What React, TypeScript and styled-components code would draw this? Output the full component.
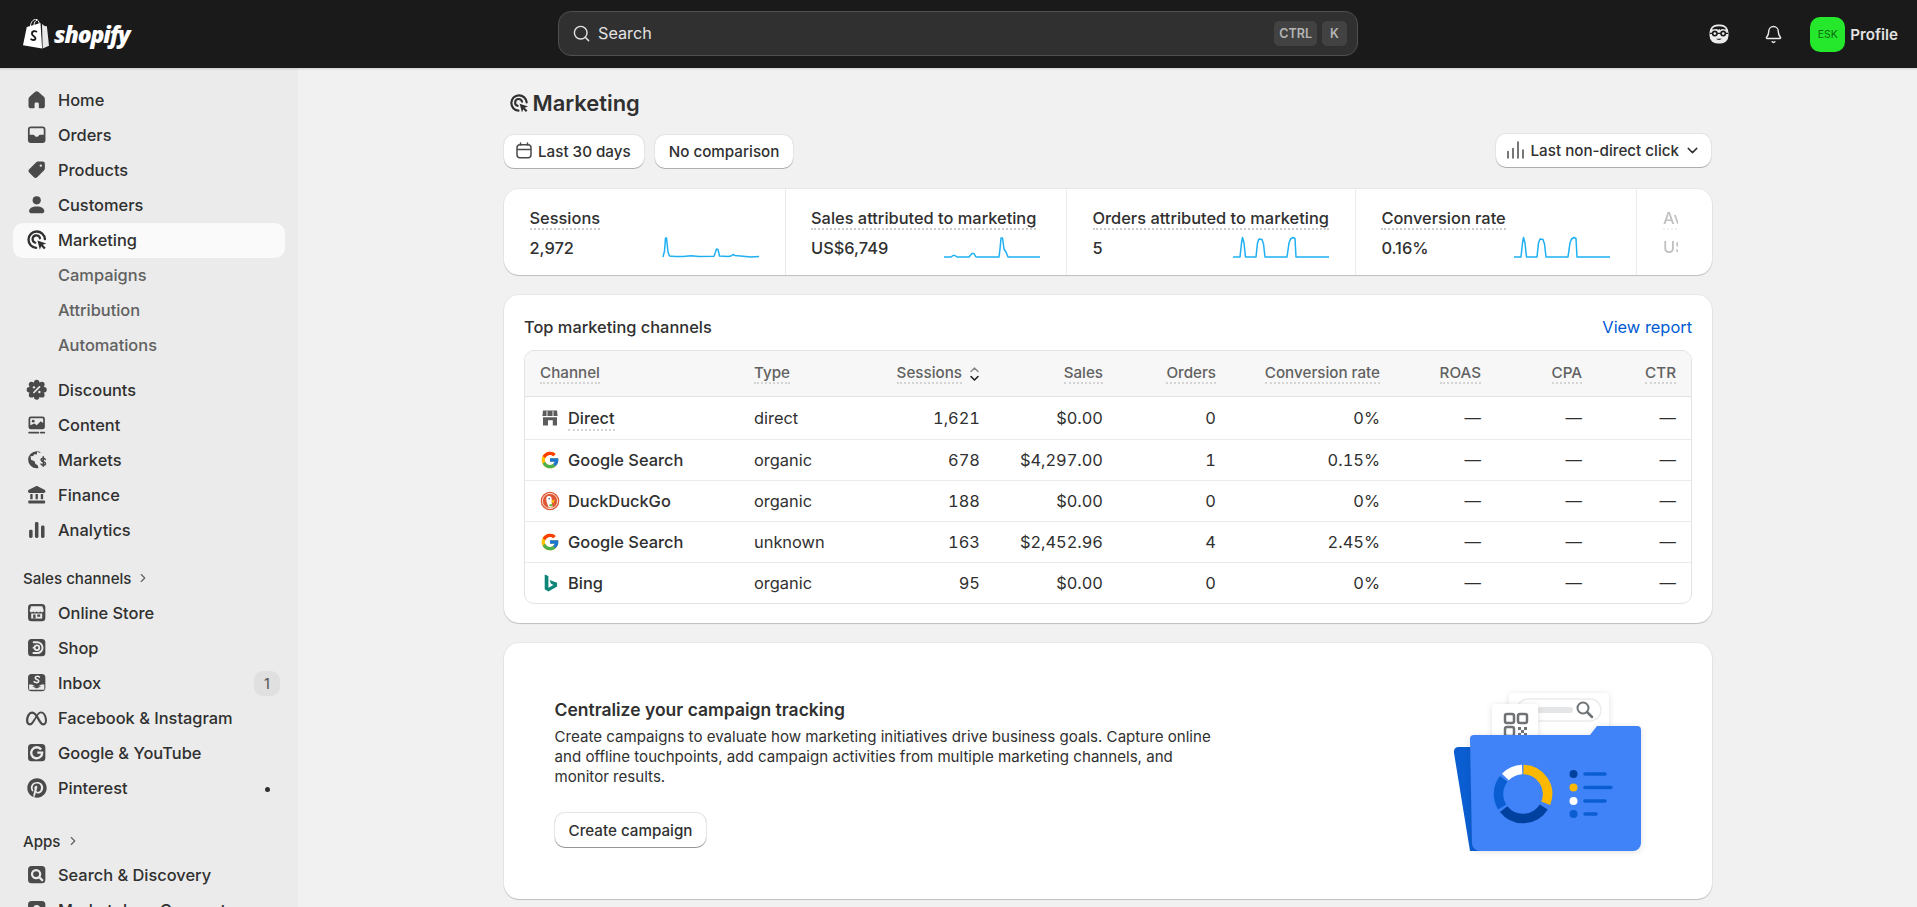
import { ReactNode } from 'react';
import styled, { createGlobalStyle } from 'styled-components';
import { Bell, ChevronDown, ChevronRight, Search } from 'lucide-react';
import { FaMeta, FaPinterest } from 'react-icons/fa6';
import { FcGoogle } from 'react-icons/fc';

const GlobalStyle = createGlobalStyle`
  html, body {
    margin: 0;
    height: 100%;
    overflow: hidden;
    background: #f1f1f1;
    font-family: Inter, "Noto Sans", sans-serif;
    font-size: 16.4px;
    color: #303030;
  }
  * { box-sizing: border-box; }
`;

/* ---------- icons (20 unit polaris style grid) ---------- */

const Ico = ({ children }: { children: ReactNode }) => (
  <svg width="23.4" height="23.4" viewBox="0 0 20 20" fill="#4a4a4a" fillRule="evenodd">
    {children}
  </svg>
);

const HomeIcon = () => (
  <Ico>
    <path d="M10 2.8c-.5 0-.9.2-1.3.5L4.1 7.2C3.4 7.8 3 8.6 3 9.5v5.8c0 1.1.9 2 2 2h2.3c.5 0 .9-.4.9-.9v-2.9c0-.6.5-1.1 1.1-1.1h1.4c.6 0 1.1.5 1.1 1.1v2.9c0 .5.4.9.9.9H15c1.1 0 2-.9 2-2V9.5c0-.9-.4-1.7-1.1-2.3l-4.6-3.9c-.4-.3-.8-.5-1.3-.5z" />
  </Ico>
);
const OrdersIcon = () => (
  <Ico>
    <path d="M5 3h10a2.5 2.5 0 0 1 2.5 2.5v9A2.5 2.5 0 0 1 15 17H5a2.5 2.5 0 0 1-2.5-2.5v-9A2.5 2.5 0 0 1 5 3zM4 5.5c0-.6.4-1 1-1h10c.6 0 1 .4 1 1V10h-3.2c-.3 0-.6.2-.8.4l-.6.9c-.2.3-.5.4-.8.4H9.4c-.3 0-.6-.1-.8-.4l-.6-.9c-.2-.2-.5-.4-.8-.4H4z" />
  </Ico>
);
const TagIcon = () => (
  <Ico>
    <path d="M11 3h4a2 2 0 0 1 2 2v4c0 .5-.2 1-.6 1.4l-6 6c-.8.8-2 .8-2.8 0l-4-4c-.8-.8-.8-2 0-2.8l6-6C9.9 3.2 10.5 3 11 3zm2.5 2.5a1 1 0 1 0 0 2 1 1 0 0 0 0-2z" />
  </Ico>
);
const PersonIcon = () => (
  <Ico>
    <circle cx="10" cy="6.3" r="3.5" />
    <path d="M3.5 15.5c0-2.5 2.5-4 6.5-4s6.5 1.5 6.5 4v.2c0 .9-.7 1.6-1.5 1.6H5c-.8 0-1.5-.7-1.5-1.6z" />
  </Ico>
);
const TargetShape = () => (
  <>
    <path d="M9.5 17A7 7 0 1 1 17 9.5" fill="none" stroke="currentColor" strokeWidth="2" strokeLinecap="round" />
    <path d="M8.8 12.6A3.2 3.2 0 1 1 12.8 8.8" fill="none" stroke="currentColor" strokeWidth="1.9" strokeLinecap="round" />
    <path d="M10.6 10.6l7.6 2.6-3 1.1 2.5 2.5-1.4 1.4-2.5-2.500-1.100 3z" fill="currentColor" />
  </>
);
const TargetIcon = () => (
  <svg width="23.4" height="23.4" viewBox="0 0 20 20" color="#303030">
    <TargetShape />
  </svg>
);
const DiscountIcon = () => (
  <Ico>
    {[0, 45, 90, 135, 180, 225, 270, 315].map((a) => (
      <circle
        key={a}
        r="2.3"
        cx={10 + 6.3 * Math.cos((a * Math.PI) / 180)}
        cy={10 + 6.3 * Math.sin((a * Math.PI) / 180)}
      />
    ))}
    <circle cx="10" cy="10" r="6.6" />
    <path d="M7.6 12.4l4.8-4.8" stroke="#ebebeb" strokeWidth="1.5" strokeLinecap="round" />
    <circle cx="7.7" cy="8" r="1" fill="#ebebeb" />
    <circle cx="12.3" cy="12" r="1" fill="#ebebeb" />
  </Ico>
);
const ContentIcon = () => (
  <Ico>
    <path d="M5 3h10a2 2 0 0 1 2 2v7a2 2 0 0 1-2 2H5a2 2 0 0 1-2-2V5a2 2 0 0 1 2-2zm-.5 7.5V5.200c0-.4.3-.7.7-.7h9.600c.4 0 .7.3.7.7v3.300l-2-1.500-3.500 3.500-2-1.500z" />
    <circle cx="7" cy="7" r="1.200" />
    <path d="M3.500 16.700h8M13.500 16.700h3" stroke="#4a4a4a" strokeWidth="1.500" strokeLinecap="round" />
  </Ico>
);
const MarketsIcon = () => (
  <Ico>
    <path d="M10 2.700a7.300 7.300 0 0 0 0 14.600c.6 0 1.100-.1 1.600-.2-.5-.8-.6-1.500-.6-2.100l-2.200-1.500-.6-2.200-3-1.300-.5-3 2.300-.2.800-1.500 2.300.3.300-2.300 1.900.8 1.300-.5A7.300 7.300 0 0 0 10 2.700z" />
    <path d="M17.400 9.800c-.3-.7-1-1.100-1.800-1.100-1 0-1.800.6-1.800 1.500 0 2 3.700 1.100 3.700 3.100 0 .9-.9 1.500-1.900 1.500-.8 0-1.600-.4-1.900-1.100M15.600 7.500v8.200" fill="none" stroke="#4a4a4a" strokeWidth="1.300" strokeLinecap="round" />
  </Ico>
);
const FinanceIcon = () => (
  <Ico>
    <path d="M9.300 2.700c.4-.2 1-.2 1.400 0l6 3c.5.3.8.7.8 1.300 0 .8-.7 1.500-1.500 1.500H4c-.8 0-1.500-.7-1.500-1.500 0-.6.3-1 .8-1.300z" />
    <path d="M4.500 9.500h2v4.500h-2zM9 9.500h2v4.500H9zM13.500 9.500h2v4.500h-2z" />
    <rect x="2.800" y="15" width="14.400" height="2.500" rx=".8" />
  </Ico>
);
const AnalyticsIcon = () => (
  <Ico>
    <rect x="3.500" y="10" width="3" height="7" rx="1.200" />
    <rect x="8.500" y="3.500" width="3" height="13.500" rx="1.200" />
    <rect x="13.700" y="6.500" width="3" height="10.500" rx="1.200" />
  </Ico>
);

const AppTile = ({ children }: { children: ReactNode }) => (
  <Ico>
    <rect x="2.600" y="2.600" width="14.800" height="14.800" rx="3" />
    {children}
  </Ico>
);
const StoreTile = () => (
  <AppTile>
    <path d="M5.200 4.500h9.600l1.200 3.600c0 1-.8 1.600-1.500 1.600s-1.300-.4-1.500-1c-.2.600-.9 1-1.500 1-.7 0-1.300-.4-1.500-1-.2.600-.8 1-1.500 1-.6 0-1.300-.4-1.500-1-.2.600-.8 1-1.500 1S4 9.100 4 8.100z" fill="#ebebeb" />
    <path d="M5.300 10.700h9.400v4.300H5.300z" fill="#ebebeb" />
    <path d="M7 11.500h2v3.500H7zM10.500 11.500h2.500v2h-2.500z" />
  </AppTile>
);
const ShopTile = () => (
  <AppTile>
    <path d="M7.400 5.400h3a4.600 4.600 0 0 1 0 9.200H7.200" fill="none" stroke="#ebebeb" strokeWidth="1.700" strokeLinecap="round" />
    <circle cx="10.200" cy="10" r="2" fill="none" stroke="#ebebeb" strokeWidth="1.500" />
    <path d="M6.600 10h2" stroke="#ebebeb" strokeWidth="1.500" />
  </AppTile>
);
const InboxTile = () => (
  <AppTile>
    <path d="M3.500 11.500v4.500h13v-4.500h-2.500l-4 2.500-4-2.500z" fill="#ebebeb" />
    <path d="M6 13l4 2 4-2" fill="#4a4a4a" />
    <path d="M12.300 5.200c-.4-.5-1.200-.8-2-.7-1 .1-1.800.8-1.500 1.700.4 1.200 3 1 3 2.400 0 1-1.200 1.500-2.300 1.300-.7-.1-1.300-.4-1.700-.8" fill="none" stroke="#ebebeb" strokeWidth="1.300" strokeLinecap="round" />
  </AppTile>
);
const GoogleTile = () => (
  <AppTile>
    <path d="M13.800 7.300A4.700 4.700 0 1 0 14.700 10H10.500" fill="none" stroke="#ebebeb" strokeWidth="2" />
  </AppTile>
);
const SearchTile = () => (
  <AppTile>
    <circle cx="9.500" cy="9.500" r="3.500" fill="none" stroke="#ebebeb" strokeWidth="1.900" />
    <path d="M12.200 12.200l2.500 2.500" stroke="#ebebeb" strokeWidth="2" strokeLinecap="round" />
  </AppTile>
);
const ConnectTile = () => (
  <AppTile>
    <circle cx="10" cy="9" r="3" fill="#ebebeb" />
  </AppTile>
);
const MetaGlyph = () => <FaMeta size={21} color="#4a4a4a" />;
const PinGlyph = () => <FaPinterest size={20} color="#4a4a4a" />;

const DirectIcon = () => (
  <svg width="20" height="20" viewBox="0 0 20 20" fill="#5c5c5c">
    <path d="M3 2.500h14l.6 5.500H2.400z" />
    <path d="M7 3v5M13 3v5" stroke="#fff" strokeWidth=".9" />
    <path d="M3 9.300h14v8.200h-4.200v-5.300H8v5.300H3z" />
  </svg>
);
const BingIcon = () => (
  <svg width="20" height="20" viewBox="0 0 20 20" fill="#0f8577">
    <path d="M4.700 1.600l3.700 1.300v11.900l5-2.900-2.400-1.100-1.500-3.800 7.600 2.700v3.800L8.400 18.400l-3.700-2.100z" />
  </svg>
);
const DuckIcon = () => (
  <svg width="20" height="20" viewBox="0 0 20 20">
    <circle cx="10" cy="10" r="9.300" fill="#de5833" />
    <circle cx="10" cy="10" r="7.600" fill="none" stroke="#fff" strokeWidth=".8" />
    <path d="M6.700 5.800c1.700-1.400 4-1 4.700.6.800 2 .2 4.200.5 6.600.1 1.200.4 2.400.9 3.400H8.700C7.700 13.500 5.200 9 6.700 5.800z" fill="#fff" />
    <circle cx="9.200" cy="7.700" r=".8" fill="#2d4f8e" />
    <path d="M11.300 9.700l3.300-1-.3 1.300-1.600.5 1.500.3-.1 1.200-2.700-.8z" fill="#fdd20a" />
    <path d="M9.200 13.600l3-.6.100 2.500-3-.3z" fill="#65bc46" />
  </svg>
);
const CalendarIcon = () => (
  <svg width="18" height="18" viewBox="0 0 18 18" fill="none" stroke="#4a4a4a" strokeWidth="1.500">
    <rect x="2" y="2.800" width="14" height="13" rx="3" />
    <path d="M2 7.500h14" />
    <path d="M5.500 1v2M12.500 1v2" strokeLinecap="round" />
  </svg>
);
const BarsIcon = () => (
  <svg width="20" height="20" viewBox="0 0 20 20" fill="none" stroke="#4a4a4a" strokeWidth="1.500" strokeLinecap="round">
    <path d="M2 11.500V18M7 8.500V18M12 2v16M17 10v8" />
  </svg>
);
const SortIcon = () => (
  <svg width="11" height="16" viewBox="0 0 11 16" fill="none" strokeWidth="1.500" strokeLinecap="round" strokeLinejoin="round">
    <path d="M2 5.500L5.500 2 9 5.500" stroke="#8a8a8a" />
    <path d="M2 10.500L5.500 14 9 10.500" stroke="#1a1a1a" />
  </svg>
);
const FaceIcon = () => (
  <svg width="20" height="20" viewBox="0 0 20 20">
    <rect x=".5" y=".5" width="19" height="19" rx="8" fill="#ececec" />
    <path d="M3 5.500c1-2 3-3.200 7-3.200s6 1.200 7 3.200l-4.500-.6-1 1.300-1.200-1.300-1.300 1.200-1-1.200z" fill="#1a1a1a" />
    <circle cx="5.800" cy="9.600" r="3" fill="#1a1a1a" />
    <circle cx="14.200" cy="9.600" r="3" fill="#1a1a1a" />
    <circle cx="5.800" cy="9.600" r="1.300" fill="#ececec" />
    <circle cx="14.200" cy="9.600" r="1.300" fill="#ececec" />
    <path d="M8 9.300h4M.8 9.300h2.500M16.800 9.300h2.400" stroke="#1a1a1a" strokeWidth="1.300" />
    <path d="M7 14.800c1.500 1.500 4.500 1.500 6 0z" fill="#1a1a1a" />
  </svg>
);
const ShopifyBag = () => (
  <svg width="26" height="30" viewBox="0 0 26 30">
    <path d="M3.800 8L17.500 4l1.600 25.500L0 26.300z" fill="#fff" />
    <path d="M19 5l2.500 2 2.400.3L26 26.800 19.700 29.500z" fill="#e8e8e8" />
    <path d="M7.500 7c0-3.500 3-6.800 5-6.800 2.500 0 3.500 2.500 3.800 4.800M11 6c.2-2.300 1.400-4.700 3-4.800" fill="none" stroke="#fff" strokeWidth="1" />
    <path d="M13.300 12.500c-1.200-.6-4.300-.7-4.400 2-.1 2.700 3.700 2.700 3.600 5-.1 1.900-2.800 1.700-4.300.7" fill="none" stroke="#1a1a1a" strokeWidth="1.900" strokeLinecap="round" />
  </svg>
);

/* ---------- sparklines ---------- */

const Spark = ({ points }: { points: number[][] }) => (
  <SparkSvg viewBox="0 0 96 22">
    <polyline points={points.map((p) => p.join(',')).join(' ')} />
  </SparkSvg>
);

const sparkSessions = [[0, 20], [1.500, 14], [2.500, 1], [3.500, 1], [5, 15], [6.500, 19], [12, 19.500], [20, 19.500], [28, 18.700], [36, 19.600], [51, 19.300], [52.500, 15], [53.500, 12], [55, 12.500], [56.500, 19], [65, 19.600], [68, 19], [70, 17.500], [72, 18.500], [80, 19.200], [88, 20], [96, 19.600]];
const sparkSales = [[0, 20], [7, 20], [9, 18.500], [11, 18.500], [13, 20], [25, 20], [28, 16.500], [30, 16.500], [32, 20], [55, 20], [56, 12], [57, 1], [58.500, 1], [60, 12], [62, 15], [64, 20], [96, 20]];
const sparkPulse = [[0, 20], [7, 20], [8.500, 6], [9.500, 0.500], [11, 6], [12.500, 20], [23, 20], [24.500, 6], [26, 2], [29, 2.500], [30.500, 7], [32, 20], [54, 20], [56, 6], [57.500, 2], [60, 0.500], [62, 1.500], [63, 20], [96, 20]];

/* ---------- illustration ---------- */

const arcPath = (start: number, end: number) => {
  const r = 24.5;
  const at = (deg: number) => {
    const a = ((deg - 90) * Math.PI) / 180;
    return `${103 + r * Math.cos(a)} ${123 + r * Math.sin(a)}`;
  };
  return `M${at(start)} A${r} ${r} 0 ${end - start > 180 ? 1 : 0} 1 ${at(end)}`;
};

const FolderArt = () => (
  <svg width="260" height="200" viewBox="0 0 260 200">
    <defs>
      <filter id="soft" x="-30%" y="-30%" width="160%" height="160%">
        <feDropShadow dx="0" dy="1" stdDeviation="3" floodColor="#000" floodOpacity=".12" />
      </filter>
    </defs>
    <path d="M38 76h26v104H50L34 82c-.5-3 1-6 4-6z" fill="#0a5ed2" />
    <rect x="89" y="22" width="100" height="60" rx="4" fill="#fff" filter="url(#soft)" />
    <rect x="97" y="28" width="84" height="22" rx="11" fill="#fff" stroke="#ececec" strokeWidth="1.500" />
    <rect x="117" y="36" width="36" height="6" rx="3" fill="#e4e5e7" />
    <circle cx="163" cy="37" r="5.500" fill="none" stroke="#6f7376" strokeWidth="2" />
    <path d="M167 41l5 5" stroke="#6f7376" strokeWidth="2.500" strokeLinecap="round" />
    <rect x="72" y="33" width="46" height="50" rx="4" fill="#fff" filter="url(#soft)" />
    <g fill="none" stroke="#6f7376" strokeWidth="2.500">
      <rect x="85" y="43" width="9" height="9" rx="2" />
      <rect x="98" y="43" width="9" height="9" rx="2" />
      <rect x="85" y="56" width="9" height="9" rx="2" />
    </g>
    <path d="M98 56h3v3h-3zM104 56h3v3h-3zM101 59h3v3h-3zM98 62h3v3h-3zM104 62h3v3h-3z" fill="#6f7376" />
    <path
      d="M54 64h116l7-9h40a4 4 0 0 1 4 4v113a8 8 0 0 1-8 8H60a8 8 0 0 1-8-8L50 68a4 4 0 0 1 4-4z"
      fill="#3f83f8"
      filter="url(#soft)"
    />
    <g fill="none" strokeWidth="9.500">
      <path d={arcPath(1, 112)} stroke="#ffb800" />
      <path d={arcPath(122, 232)} stroke="#00409e" />
      <path d={arcPath(238, 308)} stroke="#0a5ed2" />
      <path d={arcPath(314, 358)} stroke="#fff" />
    </g>
    <circle cx="153.500" cy="103" r="4" fill="#00409e" />
    <circle cx="153.500" cy="116.500" r="4" fill="#ffb800" />
    <circle cx="153.500" cy="130" r="4" fill="#fff" />
    <circle cx="153.500" cy="143" r="4" fill="#0a5ed2" />
    <path d="M165 103h20M165 116.500h26M165 130h20M165 143h11" stroke="#0a5ed2" strokeWidth="3.500" strokeLinecap="round" />
  </svg>
);

/* ---------- data ---------- */

const mainNav = [
  { label: 'Home', icon: <HomeIcon /> },
  { label: 'Orders', icon: <OrdersIcon /> },
  { label: 'Products', icon: <TagIcon /> },
  { label: 'Customers', icon: <PersonIcon /> },
];
const subNav = ['Campaigns', 'Attribution', 'Automations'];
const lowerNav = [
  { label: 'Discounts', icon: <DiscountIcon /> },
  { label: 'Content', icon: <ContentIcon /> },
  { label: 'Markets', icon: <MarketsIcon /> },
  { label: 'Finance', icon: <FinanceIcon /> },
  { label: 'Analytics', icon: <AnalyticsIcon /> },
];

const metrics = [
  { title: 'Sessions', value: '2,972', points: sparkSessions },
  { title: 'Sales attributed to marketing', value: 'US$6,749', points: sparkSales },
  { title: 'Orders attributed to marketing', value: '5', points: sparkPulse },
  { title: 'Conversion rate', value: '0.16%', points: sparkPulse },
];

const columns = [
  { label: 'Channel', width: 214 },
  { label: 'Type', width: 141 },
  { label: 'Sessions', width: 115, right: true, sort: true },
  { label: 'Sales', width: 123, right: true },
  { label: 'Orders', width: 113, right: true },
  { label: 'Conversion rate', width: 164, right: true },
  { label: 'ROAS', width: 101, right: true },
  { label: 'CPA', width: 101, right: true },
  { label: 'CTR', width: 94, right: true },
];

const rows = [
  { icon: <DirectIcon />, name: 'Direct', dotted: true, type: 'direct', sessions: '1,621', sales: '$0.00', orders: '0', rate: '0%' },
  { icon: <FcGoogle size={20} />, name: 'Google Search', type: 'organic', sessions: '678', sales: '$4,297.00', orders: '1', rate: '0.15%' },
  { icon: <DuckIcon />, name: 'DuckDuckGo', type: 'organic', sessions: '188', sales: '$0.00', orders: '0', rate: '0%' },
  { icon: <FcGoogle size={20} />, name: 'Google Search', type: 'unknown', sessions: '163', sales: '$2,452.96', orders: '4', rate: '2.45%' },
  { icon: <BingIcon />, name: 'Bing', type: 'organic', sessions: '95', sales: '$0.00', orders: '0', rate: '0%' },
];

/* ---------- page ---------- */

const App = () => {
  return (
    <Page>
      <GlobalStyle />
      <TopBar>
        <LogoLink>
          <ShopifyBag />
          <LogoWord>shopify</LogoWord>
        </LogoLink>
        <SearchBox>
          <Search size={19} strokeWidth={1.8} color="#e3e3e3" />
          <SearchText>Search</SearchText>
          <Kbd>CTRL</Kbd>
          <Kbd>K</Kbd>
        </SearchBox>
        <TopActions>
          <TopIconSlot>
            <FaceIcon />
          </TopIconSlot>
          <TopIconSlot>
            <Bell size={19} strokeWidth={1.8} color="#e9e9e9" />
          </TopIconSlot>
          <ProfileWrap>
            <Avatar>ESK</Avatar>
            <ProfileName>Profile</ProfileName>
          </ProfileWrap>
        </TopActions>
      </TopBar>

      <Body>
        <Sidebar>
          {mainNav.map((item) => (
            <NavRow key={item.label}>
              {item.icon}
              <NavLabel>{item.label}</NavLabel>
            </NavRow>
          ))}
          <NavRow $active>
            <TargetIcon />
            <NavLabel>Marketing</NavLabel>
          </NavRow>
          {subNav.map((label) => (
            <SubRow key={label}>{label}</SubRow>
          ))}
          <NavGroup>
            {lowerNav.map((item) => (
              <NavRow key={item.label}>
                {item.icon}
                <NavLabel>{item.label}</NavLabel>
              </NavRow>
            ))}
          </NavGroup>

          <SectionHead>
            Sales channels <ChevronRight size={14} color="#616161" />
          </SectionHead>
          <NavRow>
            <StoreTile />
            <NavLabel>Online Store</NavLabel>
          </NavRow>
          <NavRow>
            <ShopTile />
            <NavLabel>Shop</NavLabel>
          </NavRow>
          <NavRow>
            <InboxTile />
            <NavLabel>Inbox</NavLabel>
            <CountBadge>1</CountBadge>
          </NavRow>
          <NavRow>
            <IconSlot>
              <MetaGlyph />
            </IconSlot>
            <NavLabel>Facebook &amp; Instagram</NavLabel>
          </NavRow>
          <NavRow>
            <GoogleTile />
            <NavLabel>Google &amp; YouTube</NavLabel>
          </NavRow>
          <NavRow>
            <IconSlot>
              <PinGlyph />
            </IconSlot>
            <NavLabel>Pinterest</NavLabel>
            <StatusDot />
          </NavRow>

          <SectionHead $wide>
            Apps <ChevronRight size={14} color="#616161" />
          </SectionHead>
          <NavRow>
            <SearchTile />
            <NavLabel>Search &amp; Discovery</NavLabel>
          </NavRow>
          <NavRow>
            <ConnectTile />
            <NavLabel>Marketplace Connect</NavLabel>
          </NavRow>
        </Sidebar>

        <Main>
          <Column>
            <TitleRow>
              <TitleIcon viewBox="0 0 20 20">
                <TargetShape />
              </TitleIcon>
              <Title>Marketing</Title>
            </TitleRow>

            <Toolbar>
              <ToolGroup>
                <IconToolButton>
                  <CalendarIcon />
                  Last 30 days
                </IconToolButton>
                <ToolButton>No comparison</ToolButton>
              </ToolGroup>
              <ModelButton>
                <BarsIcon />
                Last non-direct click
                <ChevronDown size={17} color="#303030" />
              </ModelButton>
            </Toolbar>

            <MetricCard>
              {metrics.map((m) => (
                <MetricCell key={m.title}>
                  <MetricInner>
                    <MetricTitle>{m.title}</MetricTitle>
                    <MetricRow>
                      <MetricValue>{m.value}</MetricValue>
                      <Spark points={m.points} />
                    </MetricRow>
                  </MetricInner>
                </MetricCell>
              ))}
              <FadedCell>
                <FadedClip>
                  <MetricTitle>Average order value</MetricTitle>
                  <MetricValue>US$1,350</MetricValue>
                </FadedClip>
              </FadedCell>
            </MetricCard>

            <ChannelCard>
              <CardHead>
                <CardTitle>Top marketing channels</CardTitle>
                <ReportLink>View report</ReportLink>
              </CardHead>
              <TableWrap>
                <Table>
                  <colgroup>
                    {columns.map((c) => (
                      <Col key={c.label} $w={c.width} />
                    ))}
                  </colgroup>
                  <thead>
                    <tr>
                      {columns.map((c) => (
                        <Th key={c.label} $right={c.right}>
                          <HeadInner $right={c.right}>
                            <HeadText>{c.label}</HeadText>
                            {c.sort && <SortIcon />}
                          </HeadInner>
                        </Th>
                      ))}
                    </tr>
                  </thead>
                  <tbody>
                    {rows.map((r, i) => (
                      <tr key={i}>
                        <Td>
                          <ChannelCell>
                            <ChannelIcon>{r.icon}</ChannelIcon>
                            <ChannelName $dotted={r.dotted}>{r.name}</ChannelName>
                          </ChannelCell>
                        </Td>
                        <Td>{r.type}</Td>
                        <Td $right>{r.sessions}</Td>
                        <Td $right>{r.sales}</Td>
                        <Td $right>{r.orders}</Td>
                        <Td $right>{r.rate}</Td>
                        <Td $right>—</Td>
                        <Td $right>—</Td>
                        <Td $right>—</Td>
                      </tr>
                    ))}
                  </tbody>
                </Table>
              </TableWrap>
            </ChannelCard>

            <PromoCard>
              <PromoText>
                <PromoTitle>Centralize your campaign tracking</PromoTitle>
                <PromoDesc>
                  Create campaigns to evaluate how marketing initiatives drive business goals. Capture online and
                  offline touchpoints, add campaign activities from multiple marketing channels, and monitor results.
                </PromoDesc>
                <CreateButton>Create campaign</CreateButton>
              </PromoText>
              <FolderArt />
            </PromoCard>
          </Column>
        </Main>
      </Body>
    </Page>
  );
};

export default App;

const Page = styled.div`
  height: 907px;
  display: flex;
  flex-direction: column;
  overflow: hidden;
`;

const TopBar = styled.header`
  height: 68px;
  flex: none;
  background: #1a1a1a;
  display: grid;
  grid-template-columns: 558px 800px 1fr;
  align-items: center;
  box-shadow: 0 1px 2px rgba(0, 0, 0, 0.15);
  z-index: 2;
`;

const LogoLink = styled.div`
  display: flex;
  align-items: center;
  gap: 5px;
  padding-left: 23px;
`;

const LogoWord = styled.span`
  font-family: 'Open Sans', sans-serif;
  font-style: italic;
  font-weight: 800;
  font-size: 23px;
  letter-spacing: -1.1px;
  color: #fff;
  line-height: 30px;
`;

const SearchBox = styled.div`
  height: 45px;
  margin-bottom: 2px;
  background: #303030;
  border: 1px solid #4f4f4f;
  border-radius: 13px;
  display: flex;
  align-items: center;
  padding: 0 10px 0 13px;
  gap: 5px;
`;

const SearchText = styled.span`
  color: #e3e3e3;
  font-size: 16.2px;
  margin-left: 2px;
  flex: 1;
`;

const Kbd = styled.span`
  height: 25px;
  min-width: 25px;
  padding: 0 5px;
  border-radius: 5px;
  background: #424242;
  color: #b5b5b5;
  font-size: 12.500px;
  font-weight: 600;
  display: flex;
  align-items: center;
  justify-content: center;
`;

const TopActions = styled.div`
  display: flex;
  align-items: center;
  justify-content: flex-end;
  padding-right: 19px;
`;

const TopIconSlot = styled.div`
  width: 55px;
  display: flex;
  justify-content: center;
`;

const ProfileWrap = styled.div`
  display: flex;
  align-items: center;
  gap: 5px;
  margin-left: 9px;
`;

const Avatar = styled.div`
  width: 35px;
  height: 35px;
  border-radius: 10px;
  background: #25e82c;
  color: #0d6b12;
  font-size: 10.500px;
  display: flex;
  align-items: center;
  justify-content: center;
`;

const ProfileName = styled.span`
  color: #e3e3e3;
  font-size: 15.200px;
  font-weight: 600;
`;

const Body = styled.div`
  flex: 1;
  min-height: 0;
  display: flex;
`;

const Sidebar = styled.nav`
  width: 298px;
  flex: none;
  background: #ebebeb;
  padding-top: 14.500px;
  overflow: hidden;
`;

const NavRow = styled.div<{ $active?: boolean }>`
  height: 35px;
  margin: 0 13px;
  padding: 0 5px 0 12px;
  display: flex;
  align-items: center;
  gap: 9.600px;
  border-radius: 10px;
  background: ${(p) => (p.$active ? '#fafafa' : 'transparent')};
  font-weight: ${(p) => (p.$active ? 550 : 450)};
  svg {
    flex: none;
  }
`;

const NavLabel = styled.span`
  flex: 1;
  white-space: nowrap;
  color: #303030;
`;

const SubRow = styled.div`
  height: 35px;
  margin: 0 13px;
  padding-left: 45px;
  display: flex;
  align-items: center;
  font-weight: 450;
  color: #616161;
`;

const NavGroup = styled.div`
  margin-top: 10px;
`;

const IconSlot = styled.span`
  width: 23.400px;
  display: flex;
  justify-content: center;
`;

const SectionHead = styled.div<{ $wide?: boolean }>`
  height: 20px;
  margin: ${(p) => (p.$wide ? '25.500px 0 6.500px 23px' : '20.500px 0 7.500px 23px')};
  display: flex;
  align-items: center;
  gap: 5px;
  font-size: 15.100px;
  font-weight: 450;
  color: #303030;
`;

const CountBadge = styled.span`
  width: 26px;
  height: 25px;
  border-radius: 9px;
  background: #e0e0e0;
  color: #616161;
  font-size: 14px;
  display: flex;
  align-items: center;
  justify-content: center;
`;

const StatusDot = styled.span`
  width: 5px;
  height: 5px;
  border-radius: 50%;
  background: #303030;
  margin-right: 10px;
  margin-top: 2px;
`;

const Main = styled.main`
  flex: 1;
  min-width: 0;
  overflow: hidden;
  padding-top: 20px;
`;

const Column = styled.div`
  width: 1208px;
  margin-left: 206px;
`;

const TitleRow = styled.div`
  height: 30px;
  display: flex;
  align-items: center;
  gap: 3px;
  padding-left: 3.500px;
`;

const TitleIcon = styled.svg`
  width: 22px;
  height: 22px;
  color: #303030;
`;

const Title = styled.h1`
  margin: 0;
  font-size: 21.900px;
  font-weight: 600;
  color: #303030;
  line-height: 30px;
`;

const Toolbar = styled.div`
  margin-top: 16.500px;
  display: flex;
  justify-content: space-between;
`;

const ToolGroup = styled.div`
  display: flex;
  gap: 11px;
`;

const ToolButton = styled.div`
  height: 33px;
  padding: 0 14px;
  display: flex;
  align-items: center;
  gap: 5px;
  background: #fff;
  border-radius: 10px;
  font-weight: 500;
  font-size: 15.200px;
  color: #303030;
  white-space: nowrap;
  box-shadow: 0 0 0 1px rgba(0, 0, 0, 0.05), 0 1px 0 #b8b8b8;
`;

const IconToolButton = styled(ToolButton)`
  padding: 0 13px 0 11px;
`;

const ModelButton = styled(ToolButton)`
  padding: 0 10px 0 10px;
  margin: -1px 1px 0 0;
`;

const CardBase = styled.section`
  background: #fff;
  border-radius: 15px;
  box-shadow: 0 0 0 1px rgba(0, 0, 0, 0.04), 0 1px 1px rgba(0, 0, 0, 0.18);
`;

const MetricCard = styled(CardBase)`
  margin-top: 21.500px;
  height: 86px;
  display: flex;
  overflow: hidden;
`;

const MetricCell = styled.div`
  flex: none;
  padding: 19px 26px 0 25.500px;
  border-right: 1px solid #ebebeb;
`;

const MetricInner = styled.div`
  min-width: 229px;
  display: flex;
  flex-direction: column;
  align-items: flex-start;
`;

const MetricTitle = styled.span`
  display: inline-block;
  font-weight: 450;
  white-space: nowrap;
  line-height: 20px;
  border-bottom: 2px dotted #cccccc;
`;

const MetricRow = styled.div`
  width: 100%;
  margin-top: 7px;
  display: flex;
  justify-content: space-between;
  align-items: center;
`;

const MetricValue = styled.div`
  font-weight: 500;
  line-height: 20px;
  white-space: nowrap;
`;

const SparkSvg = styled.svg`
  width: 96px;
  height: 22px;
  overflow: visible;
  polyline {
    fill: none;
    stroke: #1fb0f2;
    stroke-width: 1.500;
    stroke-linejoin: round;
  }
`;

const FadedCell = styled.div`
  flex: 1;
  padding: 19px 0 0 25.500px;
`;

const FadedClip = styled.div`
  width: 15px;
  overflow: hidden;
  opacity: 0.3;
  ${MetricValue} {
    margin-top: 7px;
  }
`;

const ChannelCard = styled(CardBase)`
  margin-top: 19.500px;
  height: 328.500px;
  padding: 20px 20px 0;
`;

const CardHead = styled.div`
  display: flex;
  justify-content: space-between;
  align-items: center;
  height: 24px;
  margin-bottom: 11.500px;
`;

const CardTitle = styled.h2`
  margin: 0;
  font-size: 16.400px;
  font-weight: 550;
`;

const ReportLink = styled.a`
  color: #005bd3;
  font-size: 16.400px;
`;

const TableWrap = styled.div`
  border: 1px solid #e3e3e3;
  border-radius: 10px;
  overflow: hidden;
  width: 1168px;
`;

const Table = styled.table`
  width: 1166px;
  table-layout: fixed;
  border-collapse: separate;
  border-spacing: 0;
`;

const Col = styled.col<{ $w: number }>`
  width: ${(p) => p.$w}px;
`;

const Th = styled.th<{ $right?: boolean }>`
  height: 46px;
  padding: 0 15px;
  background: #f7f7f7;
  border-bottom: 1px solid #e3e3e3;
  text-align: ${(p) => (p.$right ? 'right' : 'left')};
  font-size: 15.200px;
  font-weight: 500;
  color: #616161;
`;

const HeadInner = styled.span<{ $right?: boolean }>`
  display: flex;
  align-items: center;
  gap: 7px;
  justify-content: ${(p) => (p.$right ? 'flex-end' : 'flex-start')};
`;

const HeadText = styled.span`
  line-height: 19px;
  border-bottom: 2px dotted #d4d4d4;
  white-space: nowrap;
`;

const Td = styled.td<{ $right?: boolean }>`
  height: 41px;
  padding: 0 15px;
  border-bottom: 1px solid #ebebeb;
  text-align: ${(p) => (p.$right ? 'right' : 'left')};
  white-space: nowrap;
  font-variant-numeric: tabular-nums;
  tr:first-child & {
    height: 43px;
  }
  tr:last-child & {
    height: 40px;
    border-bottom: none;
  }
`;

const ChannelCell = styled.div`
  display: flex;
  align-items: center;
  gap: 8px;
`;

const ChannelIcon = styled.span`
  width: 20px;
  height: 20px;
  flex: none;
  display: flex;
`;

const ChannelName = styled.span<{ $dotted?: boolean }>`
  font-weight: 500;
  ${(p) => p.$dotted && 'border-bottom: 2px dotted #d4d4d4; line-height: 22px; margin-bottom: -2px;'}
`;

const PromoCard = styled(CardBase)`
  margin-top: 19.500px;
  height: 256px;
  display: flex;
  align-items: center;
  justify-content: space-between;
  padding: 0 32px 0 50.500px;
`;

const PromoText = styled.div`
  width: 670px;
  padding-top: 4px;
  display: flex;
  flex-direction: column;
  align-items: flex-start;
`;

const PromoTitle = styled.h3`
  margin: 0 0 5px;
  font-size: 17.500px;
  font-weight: 600;
  line-height: 24px;
`;

const PromoDesc = styled.p`
  margin: 0;
  font-size: 15.100px;
  line-height: 20px;
`;

const CreateButton = styled.div`
  margin-top: 26px;
  height: 34px;
  padding: 0 14px;
  display: flex;
  align-items: center;
  background: #fff;
  border-radius: 10px;
  font-size: 15.200px;
  font-weight: 500;
  color: #303030;
  box-shadow: 0 0 0 1px rgba(0, 0, 0, 0.1), 0 1px 0 #a8a8a8;
`;
